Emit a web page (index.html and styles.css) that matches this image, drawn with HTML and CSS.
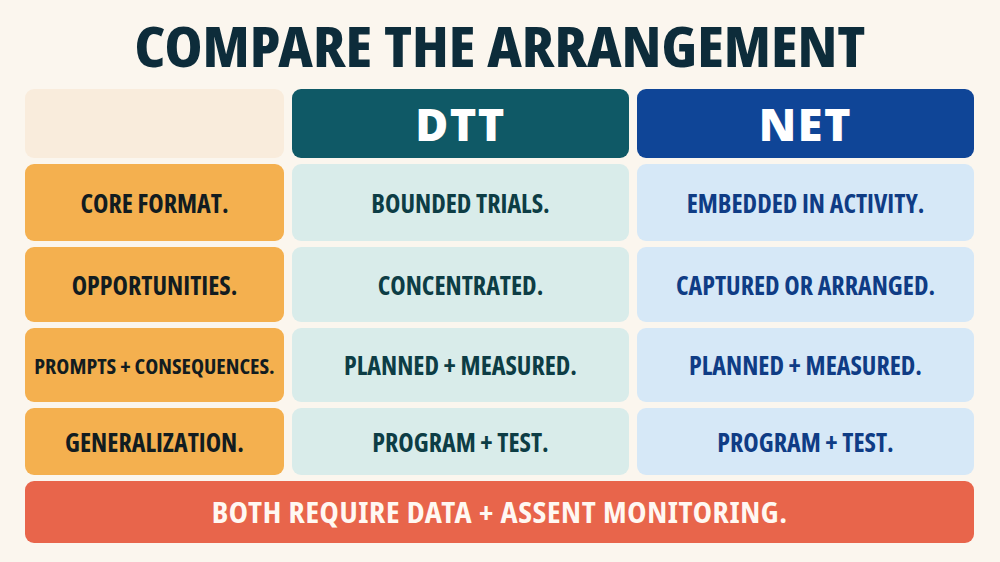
FILE: index.html
```html
<!DOCTYPE html>
<html>
<head>
<meta charset="utf-8">
<link rel="stylesheet" href="styles.css">
</head>
<body>
<main class="page">
  <h1 class="title">COMPARE THE ARRANGEMENT</h1>
  <section class="grid">
    <div class="cell blank"></div>
    <div class="cell head dtt">DTT</div>
    <div class="cell head net">NET</div>

    <div class="cell label r1">CORE FORMAT.</div>
    <div class="cell d r1">BOUNDED TRIALS.</div>
    <div class="cell n r1">EMBEDDED IN ACTIVITY.</div>

    <div class="cell label r2">OPPORTUNITIES.</div>
    <div class="cell d r2">CONCENTRATED.</div>
    <div class="cell n r2">CAPTURED OR ARRANGED.</div>

    <div class="cell label r3 tight">PROMPTS + CONSEQUENCES.</div>
    <div class="cell d r3">PLANNED + MEASURED.</div>
    <div class="cell n r3">PLANNED + MEASURED.</div>

    <div class="cell label r4">GENERALIZATION.</div>
    <div class="cell d r4">PROGRAM + TEST.</div>
    <div class="cell n r4">PROGRAM + TEST.</div>

    <div class="cell footer">BOTH REQUIRE DATA + ASSENT MONITORING.</div>
  </section>
</main>
</body>
</html>
```

FILE: styles.css
```css
html, body {
  margin: 0;
  padding: 0;
  background: #fbf6ee;
}
.page {
  width: 1000px;
  height: 562px;
  box-sizing: border-box;
  padding: 14px 25px 0 25px;
}
.title {
  margin: 0;
  height: 69px;
  text-align: center;
  font-family: "Noto Sans Display", "Open Sans", sans-serif;
  font-stretch: condensed;
  font-weight: 800;
  font-size: 55px;
  line-height: 64px;
  color: #0d2c3a;
}
.grid {
  margin-top: 6px;
  display: grid;
  grid-template-columns: 259px 337px 337px;
  grid-template-rows: 69px 77px 75px 74px 67px 62px;
  column-gap: 8px;
  row-gap: 6px;
}
.cell {
  border-radius: 9px;
  display: flex;
  align-items: center;
  justify-content: center;
  font-family: "Open Sans", "Roboto Condensed", sans-serif;
  font-stretch: 75%;
  font-weight: 700;
  font-size: 26px;
  white-space: nowrap;
}
.blank { background: #f9ecdc; }
.head {
  font-stretch: 100%;
  font-weight: 800;
  font-size: 45px;
  color: #ffffff;
  letter-spacing: 1.5px;
}
.dtt { background: #0f5966; }
.net { background: #0f4597; }
.label { background: #f4b04f; color: #121c20; }
.label.tight { font-size: 22px; }
.d { background: #d9ecea; color: #0d3d45; }
.n { background: #d6e8f7; color: #0f3c85; }
.footer {
  grid-column: 1 / 4;
  background: #e8654b;
  color: #fff8f2;
  font-family: "Noto Sans Display", "Open Sans", sans-serif;
  font-stretch: condensed;
  font-size: 28px;
  letter-spacing: 0.6px;
}
```
